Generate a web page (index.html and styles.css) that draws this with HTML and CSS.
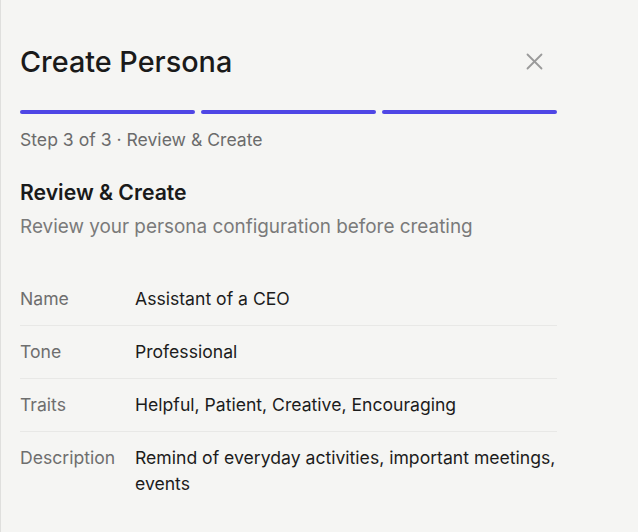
FILE: index.html
```html
<!DOCTYPE html>
<html lang="en">
<head>
    <meta charset="UTF-8">
    <meta name="viewport" content="width=device-width, initial-scale=1.0">
    <title>Create Persona</title>
    <link rel="stylesheet" href="styles.css">
</head>
<body>
    <div class="panel">
        <div class="panel-header">
            <h2>Create Persona</h2>
            <button class="close-btn" aria-label="Close">
                <svg width="17" height="17" viewBox="0 0 17 17" fill="none" stroke="#9a9a9a" stroke-width="1.8" stroke-linecap="round">
                    <line x1="1.5" y1="1.5" x2="15.5" y2="15.5"/>
                    <line x1="15.5" y1="1.5" x2="1.5" y2="15.5"/>
                </svg>
            </button>
        </div>

        <div class="progress">
            <span class="bar done"></span>
            <span class="bar done"></span>
            <span class="bar done"></span>
        </div>

        <p class="step-label">Step 3 of 3 &middot; Review &amp; Create</p>

        <h3>Review &amp; Create</h3>
        <p class="subtitle">Review your persona configuration before creating</p>

        <div class="summary">
            <div class="summary-row">
                <span class="label">Name</span>
                <span class="value">Assistant of a CEO</span>
            </div>
            <div class="summary-row">
                <span class="label">Tone</span>
                <span class="value">Professional</span>
            </div>
            <div class="summary-row">
                <span class="label">Traits</span>
                <span class="value">Helpful, Patient, Creative, Encouraging</span>
            </div>
            <div class="summary-row last">
                <span class="label">Description</span>
                <span class="value">Remind of everyday activities, important meetings, events</span>
            </div>
        </div>
    </div>
</body>
</html>
```

FILE: styles.css
```css
body {
    font-family: 'Inter', 'Noto Sans', sans-serif;
    background: #f5f5f3;
    margin: 0;
    padding: 0;
}
.panel {
    min-height: 100vh;
    box-sizing: border-box;
    width: 557px;
    padding: 44px 0 0 19px;
    border-left: 1px solid #dfdfdd;
}
.panel-header {
    display: flex;
    align-items: center;
    justify-content: space-between;
}
h2 {
    margin: 0;
    font-size: 28.8px;
    line-height: 36px;
    font-weight: 500;
    color: #1a1a1a;
}
.close-btn {
    width: 28px;
    height: 28px;
    margin: 0 9px 2px 0;
    padding: 0;
    border: none;
    background: none;
    display: flex;
    align-items: center;
    justify-content: center;
    cursor: pointer;
}
.progress {
    display: flex;
    gap: 6px;
    margin-top: 30px;
}
.bar {
    flex: 1;
    height: 4px;
    border-radius: 2px;
    background: #e2e2e0;
}
.bar.done {
    background: #4f46e5;
}
.step-label {
    margin: 14px 0 0;
    font-size: 17.6px;
    line-height: 24px;
    color: #6b6b6b;
}
h3 {
    margin: 26px 0 0;
    font-size: 21.2px;
    line-height: 28px;
    font-weight: 600;
    color: #1a1a1a;
}
.subtitle {
    margin: 8px 0 0;
    font-size: 18.9px;
    line-height: 26px;
    color: #7a7a7a;
}
.summary {
    margin-top: 33px;
}
.summary-row {
    display: grid;
    grid-template-columns: 115px 1fr;
    padding: 13px 0;
    border-bottom: 1px solid #e8e8e6;
    font-size: 17.6px;
    line-height: 26px;
}
.summary-row.last {
    border-bottom: none;
}
.label {
    color: #6e6e6e;
}
.value {
    color: #1c1c1c;
}
```
